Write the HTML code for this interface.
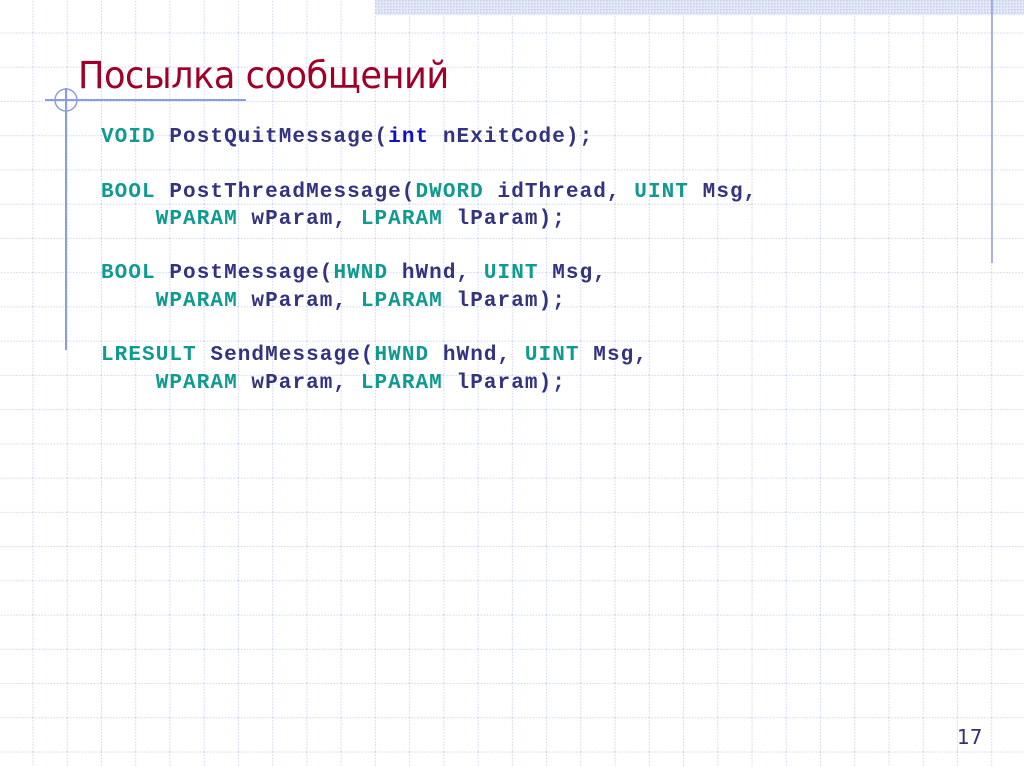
<!DOCTYPE html>
<html><head><meta charset="utf-8"><style>
html,body{margin:0;padding:0;width:1024px;height:767px;overflow:hidden;background:#fff;position:relative}
svg.bg{position:absolute;left:0;top:0}
.t{position:absolute;left:78px;top:54px;font-family:"DejaVu Sans","Liberation Sans",sans-serif;font-size:37px;color:#a00028;letter-spacing:-0.5px;white-space:nowrap;transform:scaleX(0.95);transform-origin:0 0}
pre{position:absolute;left:101px;top:124px;margin:0;font-family:"Liberation Mono",monospace;font-weight:bold;font-size:21px;letter-spacing:1.07px;line-height:27.3px;color:#333380}
.k{color:#109a90}.b{color:#1010c0}
.n{position:absolute;left:957px;top:725px;font-family:"DejaVu Sans",sans-serif;font-size:20px;color:#333370}
</style></head><body>
<svg class="bg" width="1024" height="767" xmlns="http://www.w3.org/2000/svg">
<defs>
<pattern id="g" x="32.5" y="32.5" width="34.24" height="34.24" patternUnits="userSpaceOnUse">
<line x1="0.5" y1="0" x2="0.5" y2="34.24" stroke="#cdd6f2" stroke-width="1" stroke-dasharray="1.5 1.5"/>
<line x1="0" y1="0.5" x2="34.24" y2="0.5" stroke="#cdd6f2" stroke-width="1" stroke-dasharray="1.5 1.5"/>
</pattern>
<pattern id="h" width="3" height="3" patternUnits="userSpaceOnUse">
<rect width="3" height="3" fill="#e4e9f8"/><rect width="1.5" height="1.5" fill="#c4cfee"/>
</pattern>
</defs>
<rect width="1024" height="767" fill="url(#g)"/>
<rect x="375" y="0" width="649" height="15" fill="url(#h)"/>
<line x1="992" y1="0" x2="992" y2="263" stroke="#8c9ce0" stroke-width="1.5"/>
<line x1="45" y1="100" x2="246" y2="100" stroke="#8c9ce0" stroke-width="2"/>
<line x1="66" y1="88" x2="66" y2="350" stroke="#8c9ce0" stroke-width="2"/>
<circle cx="66" cy="100" r="11" fill="none" stroke="#8c9ce0" stroke-width="1.5"/>
</svg>
<div class="t">Посылка сообщений</div>
<pre><span class="k">VOID</span> PostQuitMessage(<span class="b">int</span> nExitCode);

<span class="k">BOOL</span> PostThreadMessage(<span class="k">DWORD</span> idThread, <span class="k">UINT</span> Msg,
    <span class="k">WPARAM</span> wParam, <span class="k">LPARAM</span> lParam);

<span class="k">BOOL</span> PostMessage(<span class="k">HWND</span> hWnd, <span class="k">UINT</span> Msg,
    <span class="k">WPARAM</span> wParam, <span class="k">LPARAM</span> lParam);

<span class="k">LRESULT</span> SendMessage(<span class="k">HWND</span> hWnd, <span class="k">UINT</span> Msg,
    <span class="k">WPARAM</span> wParam, <span class="k">LPARAM</span> lParam);</pre>
<div class="n">17</div>
</body></html>
